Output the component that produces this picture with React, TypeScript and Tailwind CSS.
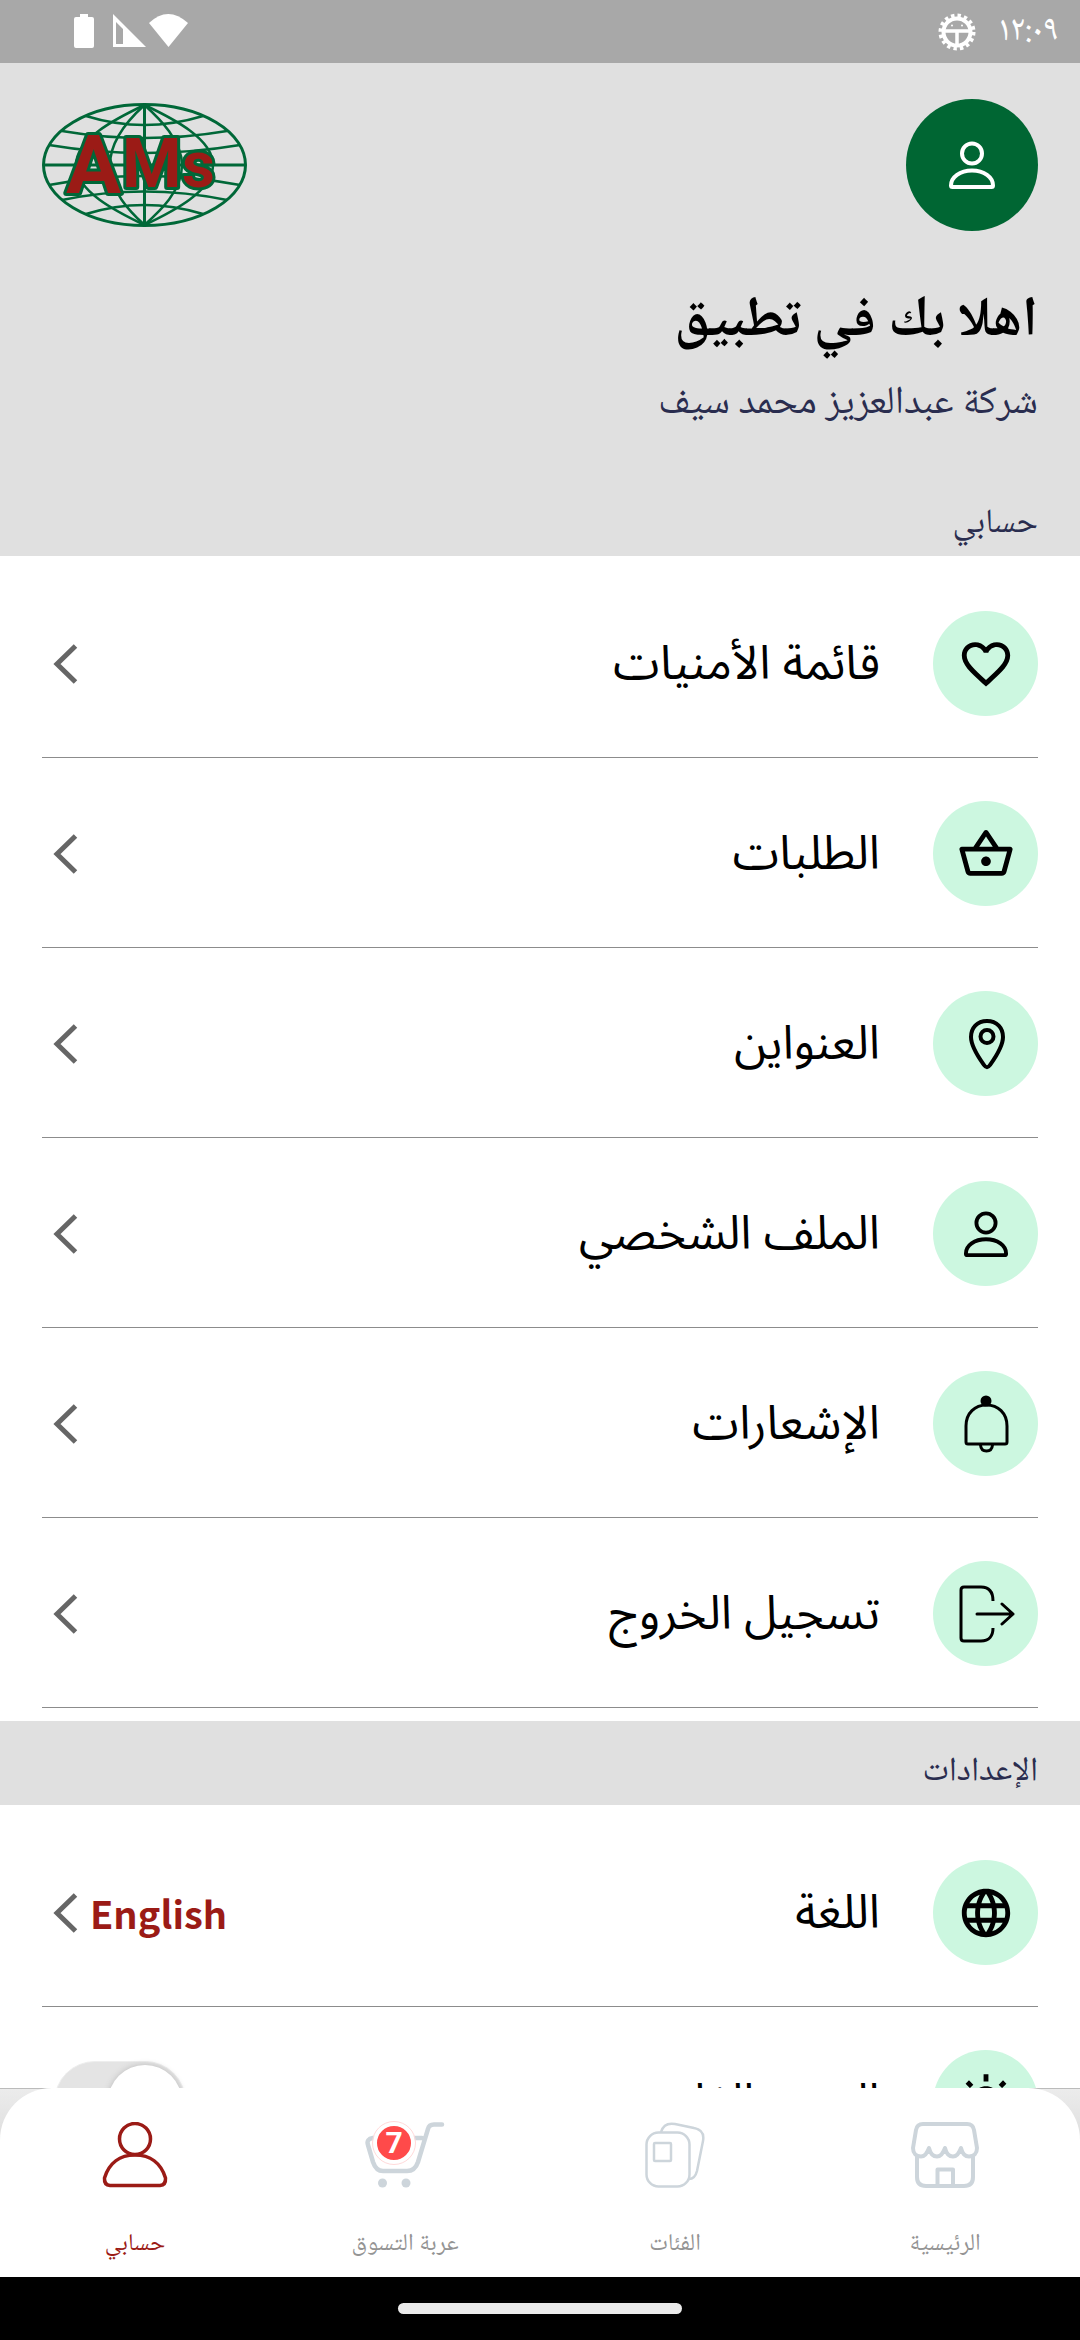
import type { ReactNode } from "react";
import {
  MdLanguage,
  MdOutlineFavoriteBorder,
  MdOutlineShoppingBasket,
  MdOutlineWbSunny,
} from "react-icons/md";

function Logo() {
  return (
    <svg width="205" height="124" viewBox="0 0 205 124" fill="none" stroke="#006838" strokeWidth="3" direction="ltr" role="img" aria-label="AMS">
      <ellipse cx="102.5" cy="62" rx="101" ry="60.5" />
      <path d="M1 62H204M102.5 1V123" />
      <path d="M102.5 2C132 16 171 36 171 62C171 88 132 108 102.5 122M102.5 2C73 16 34 36 34 62C34 88 73 108 102.5 122" strokeWidth="2.5" />
      <path d="M102.5 2C118 16 140 38 140 62C140 88 118 108 102.5 122M102.5 2C87 16 68 38 68 62C68 88 87 108 102.5 122" strokeWidth="2.5" />
      <path d="M44 13Q102 31 161 13M20 28Q102 42 185 28M7 42Q102 58 198 42M7 82Q102 64 198 82M20 97Q102 80 185 97M44 111Q102 93 161 111" strokeWidth="2.5" />
      <g fontFamily="Roboto,'Liberation Sans',sans-serif" fontWeight="700" fill="#9b1b16" strokeWidth="6" strokeLinejoin="round" paintOrder="stroke">
        <text x="24" y="90" fontSize="82">A</text>
        <text x="80" y="84" fontSize="68">M</text>
        <text x="140" y="84" fontSize="64">s</text>
      </g>
    </svg>
  );
}

function Person({ size, stroke }: { size: number; stroke: number }) {
  return (
    <svg width={size} height={size} viewBox="0 0 48 48" fill="none" stroke="currentColor" strokeWidth={stroke} strokeLinejoin="round" aria-hidden="true">
      <circle cx="24" cy="12.500" r="10" />
      <path d="M3 44.500C3 36 12 29.500 24 29.500S45 36 45 44.500C45 45.500 44.500 46 43.500 46H4.500C3.500 46 3 45.500 3 44.500Z" />
    </svg>
  );
}

function Pin() {
  return (
    <svg width="58" height="58" viewBox="0 0 58 58" fill="none" stroke="currentColor" strokeWidth="4" aria-hidden="true">
      <path d="M30 6C20 6 14 13 14 22C14 32 22 43 27 50C29 53 31 53 33 50C38 43 46 32 46 22C46 13 40 6 30 6Z" />
      <circle cx="30" cy="21.500" r="6.500" />
    </svg>
  );
}

function Bell() {
  return (
    <svg width="58" height="58" viewBox="0 0 58 58" fill="none" stroke="currentColor" strokeWidth="3" aria-hidden="true">
      <circle cx="29" cy="6" r="5.500" fill="currentColor" stroke="none" />
      <path d="M9 47V31C9 18 18 10 29.500 10S50 18 50 31V47Q50 49 48 49H11Q9 49 9 47Z" />
      <path d="M23.500 50Q24 56 29.500 56T35.500 50" />
    </svg>
  );
}

function Logout() {
  return (
    <svg width="58" height="58" viewBox="0 0 58 58" fill="none" stroke="currentColor" strokeWidth="3" strokeLinecap="round" strokeLinejoin="round" aria-hidden="true">
      <path d="M36 16C36 7 32 2 24 2H7Q4 2 4 5V53Q4 56 7 56H24C32 56 36 51 36 43" strokeLinecap="butt" />
      <path d="M20 29H56M45 19L56 29L45 39" />
    </svg>
  );
}

function Chevron() {
  return (
    <svg width="26" height="42" viewBox="0 0 26 42" fill="none" stroke="#666666" strokeWidth="5" aria-hidden="true">
      <path d="M23.500 3L5 21L23.500 39" />
    </svg>
  );
}

function StatusBar() {
  return (
    <header className="flex h-[63px] shrink-0 items-center justify-between bg-[#a8a8a8] pr-[21px] pl-[72px] text-white">
      <div className="flex items-center gap-[22px]">
        <time className="text-[36px] leading-none">١٢:٠٩</time>
        <svg width="38" height="38" viewBox="0 0 38 38" fill="none" stroke="currentColor" aria-hidden="true">
          <circle cx="19" cy="19" r="13.500" strokeWidth="4" />
          <circle cx="19" cy="19" r="16.500" strokeWidth="4" strokeDasharray="3.400 3.080" />
          <path d="M6 18H32M19 18V32" strokeWidth="3.500" />
          <circle cx="14" cy="12.500" r="1" fill="currentColor" stroke="none" />
          <circle cx="24" cy="12.500" r="1" fill="currentColor" stroke="none" />
        </svg>
      </div>
      <svg width="118" height="36" viewBox="0 0 118 36" fill="currentColor" aria-hidden="true">
        <path d="M8 0H16V3H20Q22 3 22 5V32Q22 34 20 34H4Q2 34 2 32V5Q2 3 4 3H8Z" />
        <path fillRule="evenodd" d="M41 0L74 33H41ZM44 8V30H51V15Z" />
        <path d="M77 9Q96 -9 116 9L96.500 33Z" />
      </svg>
    </header>
  );
}

function Row({ icon, label, end }: { icon: ReactNode; label: string; end?: ReactNode }) {
  return (
    <li>
      <button type="button" className="flex h-[190px] w-full items-center border-b border-[#8c8c8c] pt-0.5 pl-[10px] text-right">
        <span className="flex size-[105px] items-center justify-center rounded-full bg-[#ccf7e0]">{icon}</span>
        <span className="mr-[53px] flex-1 text-[47px] leading-[60px]">{label}</span>
        <span className="flex items-center gap-3">
          {end}
          <Chevron />
        </span>
      </button>
    </li>
  );
}

function HomeIcon() {
  return (
    <svg width="68" height="66" viewBox="0 0 68 66" fill="none" stroke="currentColor" strokeWidth="4" strokeLinejoin="round" aria-hidden="true">
      <path d="M12 2H56Q62 2 63 8L66 26C66 31 63 34.500 58 34.500Q52 34.500 50 26Q47 34.500 42 34.500Q36 34.500 34 26Q31 34.500 26 34.500Q20 34.500 18 26Q15 34.500 10 34.500C5 34.500 2 31 2 26L5 8Q6 2 12 2Z" />
      <path d="M6 34V55Q6 64 15 64H53Q62 64 62 55V34M26.500 64V47.500H42V64" />
    </svg>
  );
}

function CardsIcon() {
  return (
    <svg width="62" height="66" viewBox="0 0 62 66" fill="none" stroke="currentColor" strokeWidth="2.500" strokeLinejoin="round" aria-hidden="true">
      <rect x="2.500" y="10.500" width="43" height="54" rx="12" />
      <path d="M17 10Q20 0 31 2L50 6Q61 8 59 19L53 49Q51 57 45 57" />
      <rect x="10" y="21" width="17" height="18" rx="1" />
    </svg>
  );
}

function CartIcon() {
  return (
    <svg width="80" height="66" viewBox="0 0 80 66" fill="none" stroke="currentColor" strokeWidth="4.500" strokeLinecap="round" aria-hidden="true">
      <path d="M57 16H8Q1 17 3 23L8 40Q11 49 18 49H42Q50 49 53 40L63 7Q64 2.500 69 2.500H77" />
      <circle cx="17.500" cy="61" r="4.500" fill="currentColor" stroke="none" />
      <circle cx="41" cy="61" r="4.500" fill="currentColor" stroke="none" />
    </svg>
  );
}

function AccountIcon() {
  return (
    <svg width="68" height="66" viewBox="0 0 68 66" fill="none" stroke="currentColor" strokeWidth="3.500" aria-hidden="true">
      <circle cx="34" cy="17" r="15.500" />
      <path d="M9 63.500H59Q65 63 64.500 56C60 41 49 33 34 33S8 41 3.500 56Q3 63 9 63.500Z" />
    </svg>
  );
}

function Tab({ icon, label, active, badge }: { icon: ReactNode; label: string; active?: boolean; badge?: string }) {
  return (
    <a href="#" aria-current={active ? "page" : undefined} className={active ? "flex flex-1 flex-col items-center pt-[34px] text-[#9b1b16]" : "flex flex-1 flex-col items-center pt-[34px] text-[#cdd5db]"}>
      <span className="relative">
        {icon}
        {badge && (
          <span className="absolute top-0 left-2 flex size-[42px] items-center justify-center rounded-full border-4 border-white bg-[#ff4a4a] font-[Roboto,sans-serif] text-[30px] leading-none font-bold text-white outline outline-[#ffdada]">
            {badge}
          </span>
        )}
      </span>
      <span className={active ? "mt-[36px] text-[24px] leading-[40px]" : "mt-[36px] text-[24px] leading-[40px] text-[#949494]"}>{label}</span>
    </a>
  );
}

export default function App() {
  return (
    <div dir="rtl" lang="ar" className="flex h-screen flex-col bg-white font-['Noto_Naskh_Arabic_UI','Noto_Naskh_Arabic','Noto_Sans_CJK_SC',sans-serif] text-black">
      <StatusBar />
      <main className="min-h-0 flex-1 overflow-hidden">
        <section className="bg-[#e0e0e0] px-[42px] pt-9">
          <div className="flex items-center justify-between">
            <span className="flex size-[132px] items-center justify-center rounded-full bg-[#006633] text-white">
              <Person size={48} stroke={4} />
            </span>
            <Logo />
          </div>
          <h1 className="mt-[50px] text-[56px] leading-[80px] font-bold">اهلا بك في تطبيق</h1>
          <p className="mt-3 text-[39px] leading-[60px] text-[#2a2d4f]">شركة عبدالعزيز محمد سيف</p>
          <h2 className="mt-[61px] pb-0.5 text-[34px] leading-[60px] text-[#2a2d4f]">حسابي</h2>
        </section>
        <ul className="px-[42px] pt-3 pb-[13px] font-['Noto_Sans_Arabic','Noto_Sans_CJK_SC',sans-serif]">
          <Row icon={<MdOutlineFavoriteBorder size={58} />} label="قائمة الأمنيات" />
          <Row icon={<MdOutlineShoppingBasket size={58} />} label="الطلبات" />
          <Row icon={<Pin />} label="العنواين" />
          <Row icon={<Person size={46} stroke={4} />} label="الملف الشخصي" />
          <Row icon={<Bell />} label="الإشعارات" />
          <Row icon={<Logout />} label="تسجيل الخروج" />
        </ul>
        <h2 className="flex h-[84px] items-center bg-[#e0e0e0] px-[42px] pt-[18px] text-[34px] text-[#2a2d4f]">الإعدادات</h2>
        <ul className="px-[42px] pt-3 font-['Noto_Sans_Arabic','Noto_Sans_CJK_SC',sans-serif]">
          <Row
            icon={<MdLanguage size={58} />}
            label="اللغة"
            end={<span lang="en" className="font-['Noto_Sans_CJK_SC',sans-serif] text-[38px] leading-[60px] font-bold text-[#9b1b16]">English</span>}
          />
          <li className="flex h-[190px] items-center pl-3">
            <span className="flex size-[105px] items-center justify-center rounded-full bg-[#ccf7e0]">
              <MdOutlineWbSunny size={58} />
            </span>
            <label htmlFor="light-mode" className="mr-[53px] flex-1 text-[47px] leading-[60px]">الوضع الفاتح</label>
            <input
              id="light-mode"
              type="checkbox"
              role="switch"
              className="flex h-[82px] w-[132px] appearance-none items-center rounded-full border border-[#eeeeee] bg-[#e4e4e4] pr-[3px] before:size-[74px] before:rounded-full before:bg-white before:shadow-[0_0_6px_#bbbbbb]"
            />
          </li>
        </ul>
      </main>
      <nav className="shrink-0 bg-linear-to-b from-[#ececec] to-[#d8d8d8] to-40% shadow-[inset_0_1px_0_#bbbbbb]">
        <div className="flex h-[189px] rounded-t-[52px] bg-white">
          <Tab icon={<HomeIcon />} label="الرئيسية" />
          <Tab icon={<CardsIcon />} label="الفئات" />
          <Tab icon={<CartIcon />} label="عربة التسوق" badge="7" />
          <Tab icon={<AccountIcon />} label="حسابي" active />
        </div>
      </nav>
      <div className="flex h-[63px] shrink-0 items-center justify-center bg-black">
        <span className="h-[11px] w-[284px] rounded-full bg-[#ebebeb]" />
      </div>
    </div>
  );
}
